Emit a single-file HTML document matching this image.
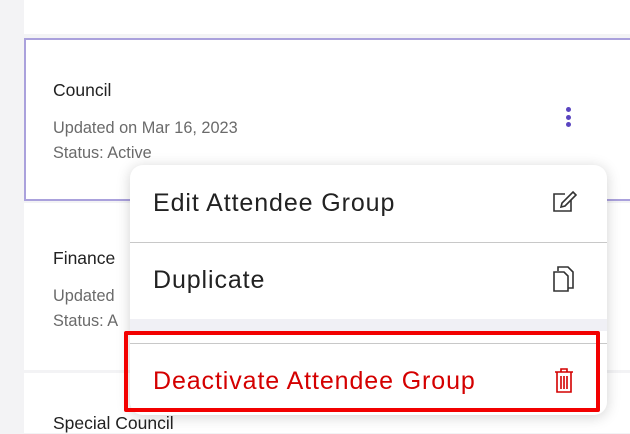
<!DOCTYPE html>
<html><head><style>
body{margin:0;width:630px;height:429px;overflow:hidden;background:#f3f3f5;font-family:"Liberation Sans",sans-serif;position:relative}
.card{position:absolute;left:24px;right:0;background:#fff}
.t{position:absolute;left:53px;font-size:17.5px;color:#222}
.s{position:absolute;left:53px;font-size:16.3px;color:#6a6a6a}
.menu{position:absolute;left:130px;top:165px;width:477px;height:250px;background:#fff;border-radius:13px;box-shadow:0 2px 14px rgba(0,0,0,.18);overflow:hidden}
.mi{position:absolute;left:23px;font-size:25px;letter-spacing:0.9px;color:#222}
</style></head><body>
<div class="card" style="top:0;height:34px"></div>
<div class="card" style="top:38px;height:159px;border:2px solid #aaa1dc;border-right:none"></div>
<div class="t" style="top:80px">Council</div>
<div class="s" style="top:119px">Updated on Mar 16, 2023</div>
<div class="s" style="top:144px">Status: Active</div>
<div style="position:absolute;left:566px;top:107px;width:5px">
<div style="width:5px;height:5px;border-radius:50%;background:#5a45c0;margin-bottom:2.5px"></div>
<div style="width:5px;height:5px;border-radius:50%;background:#5a45c0;margin-bottom:2.5px"></div>
<div style="width:5px;height:5px;border-radius:50%;background:#5a45c0"></div></div>
<div class="card" style="top:203px;height:167px"></div>
<div class="t" style="top:248px">Finance</div>
<div class="s" style="top:287px">Updated</div>
<div class="s" style="top:312px">Status: A</div>
<div class="card" style="top:373px;height:60px"></div>
<div class="t" style="top:413px">Special Council</div>
<div class="menu">
<div class="mi" style="top:24px">Edit Attendee Group</div>
<svg style="position:absolute;left:421px;top:25px" width="26" height="24" viewBox="0 0 26 24" fill="none" stroke="#333" stroke-width="1.6"><path d="M14 4H3v17h17V10"/><path d="M22 2l3 3-11 11-4 1 1-4z"/></svg>
<div style="position:absolute;left:0;right:0;top:77px;border-top:1px solid #c8c8c8"></div>
<div class="mi" style="top:101px">Duplicate</div>
<svg style="position:absolute;left:421px;top:100px" width="26" height="28" viewBox="0 0 26 28" fill="none" stroke="#333" stroke-width="1.6"><path d="M7 6V2h10l5 5v16h-5"/><path d="M3 7h10l4 4v15H3z"/></svg>
<div style="position:absolute;left:0;right:0;top:154px;height:12px;background:#f0f0f5"></div>
<div style="position:absolute;left:0;right:0;top:178px;border-top:1px solid #c8c8c8"></div>
<div class="mi" style="top:202px;color:#d40000">Deactivate Attendee Group</div>
<svg style="position:absolute;left:424px;top:202px" width="20" height="27" viewBox="0 0 20 27" fill="none" stroke="#d40000" stroke-width="1.6"><path d="M1 5h18M7 5V2h6v3M3 5v20h14V5M7 9v13M10 9v13M13 9v13"/></svg>
</div>
<div style="position:absolute;left:124px;top:331px;width:468px;height:73px;border:4px solid #f20000;border-radius:2px"></div>
</body></html>
